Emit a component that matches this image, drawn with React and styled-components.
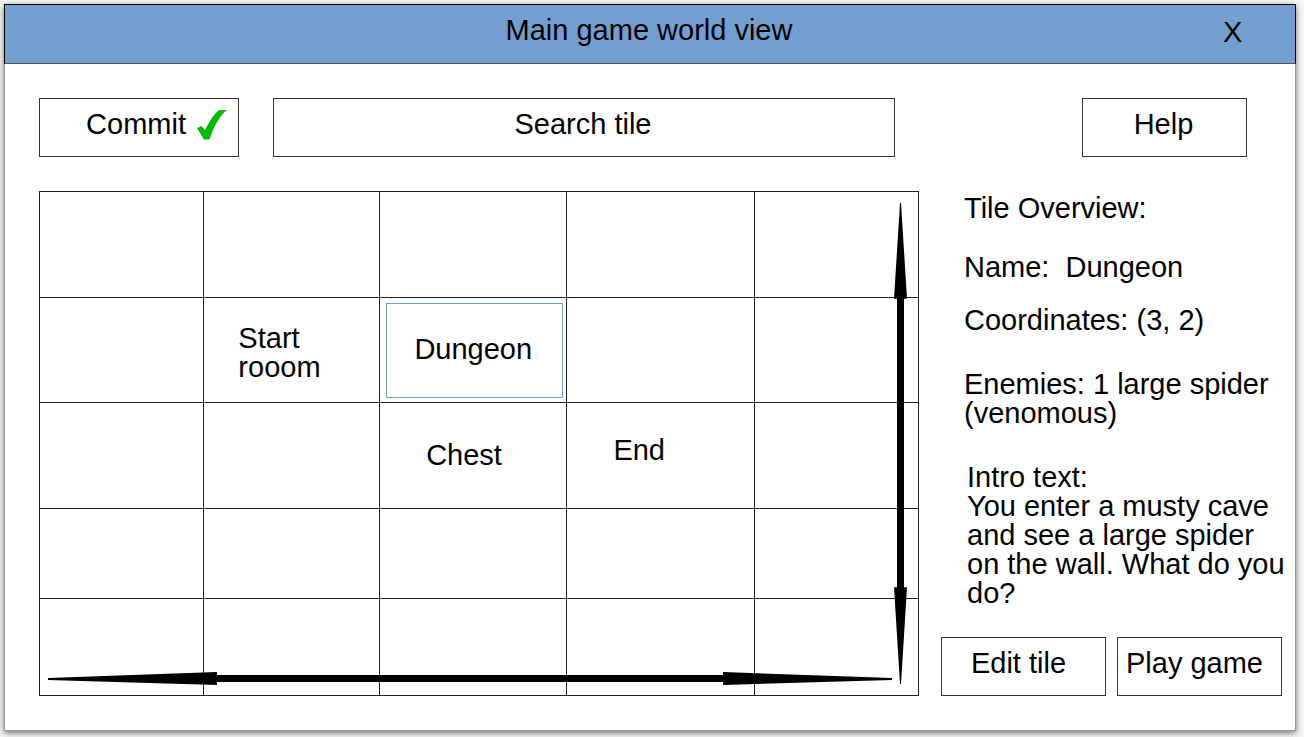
import React from "react";
import styled, { createGlobalStyle } from "styled-components";

const GlobalStyle = createGlobalStyle`
  *, *::before, *::after { box-sizing: border-box; }
  body {
    margin: 0;
    background: #f4f5f7;
    color: #000;
    font-family: "Liberation Sans", Arial, sans-serif;
    font-size: 29px;
    line-height: 29px;
  }
  button, input { font: inherit; color: inherit; }
`;

const Window = styled.main`
  display: flex;
  flex-direction: column;
  min-height: calc(100vh - 10px);
  margin: 4px 8px 6px 4px;
  background: #fff;
  border: 1px solid #98999b;
  border-top: 0;
  box-shadow: 0 2px 6px rgba(0, 0, 0, 0.55);
`;

const TitleBar = styled.header`
  display: grid;
  grid-template-columns: 78px 1fr 80px;
  align-items: center;
  height: 60px;
  margin: 0 -1px;
  padding-bottom: 8px;
  background: #729fcf;
  border: 1px solid #000;
  border-bottom-color: #555;
`;

const Title = styled.h1`
  margin: 0;
  font: inherit;
  text-align: center;
`;

const CloseButton = styled.button`
  justify-self: start;
  padding: 4px 8px 0;
  background: none;
  border: 0;
  cursor: pointer;
`;

const Content = styled.div`
  display: flex;
  flex: 1;
  flex-direction: column;
  gap: 34px;
  padding: 34px 8px 34px 34px;
`;

const Toolbar = styled.div`
  display: flex;
  height: 59px;
  padding-right: 40px;
`;

const BoxButton = styled.button`
  display: flex;
  align-items: center;
  justify-content: ${(p) => p.$align || "center"};
  gap: 10px;
  width: ${(p) => p.$width || 165}px;
  height: 59px;
  padding: 0 ${(p) => p.$padRight || 0}px 6px 0;
  white-space: nowrap;
  background: #fff;
  border: 1px solid #333;
  cursor: pointer;
`;

const SearchInput = styled.input`
  flex: 1;
  min-width: 0;
  margin: 0 187px 0 34px;
  padding: 0 2px 6px 0;
  text-align: center;
  background: #fff;
  border: 1px solid #333;
  border-radius: 0;

  &::placeholder { color: #000; opacity: 1; }
`;

const CheckMark = styled.svg`
  width: 32px;
  height: 32px;
`;

const Workspace = styled.div`
  display: flex;
  flex: 1;
  gap: 22px;
`;

const Board = styled.section`
  position: relative;
  display: flex;
  flex: 1;
`;

const Grid = styled.table`
  width: 100%;
  table-layout: fixed;
  border-collapse: collapse;
`;

const Column = styled.col`
  width: ${(p) => p.$share}%;
`;

const Row = styled.tr`
  height: ${(p) => p.$height}px;
`;

const Tile = styled.td`
  height: inherit;
  padding: 0 0 0 ${(p) => p.$inset || 0}px;
  border: 1px solid #222;
`;

const SelectedTile = styled.div`
  display: flex;
  align-items: center;
  justify-content: center;
  height: 95px;
  margin: 0 3px 0 6px;
  padding: 0 3px 2px 0;
  border: 1px solid #729fcf;
`;

const TileName = styled.div`
  max-width: 100px;
  padding: ${(p) => p.$pad || "0"};
`;

const HorizontalArrow = styled.svg`
  position: absolute;
  left: 9px;
  bottom: 11px;
  width: calc(100% - 36px);
  height: 13px;
`;

const VerticalArrow = styled.svg`
  position: absolute;
  top: 12px;
  right: 12px;
  width: 13px;
  height: calc(100% - 24px);
`;

const Sidebar = styled.aside`
  display: flex;
  flex-direction: column;
  width: 346px;
`;

const Overview = styled.div`
  display: flex;
  flex-direction: column;
  padding: 3px 0 0 23px;
`;

const Line = styled.p`
  margin: 0 0 ${(p) => p.$gap || 0}px;
  white-space: pre-wrap;
`;

const Intro = styled.div`
  padding-left: 3px;
`;

const Actions = styled.div`
  display: flex;
  gap: 11px;
  margin-top: auto;
`;

const columns = [18.7, 20, 21.3, 21.3, 18.7];

const rows = [
  { height: 106, tiles: [{}, {}, {}, {}, {}] },
  {
    height: 105,
    tiles: [{}, { name: "Start rooom", inset: 34, pad: "6px 0 0" }, { name: "Dungeon", selected: true }, {}, {}],
  },
  {
    height: 106,
    tiles: [{}, {}, { name: "Chest", inset: 46 }, { name: "End", inset: 46, pad: "0 0 10px" }, {}],
  },
  { height: 90, tiles: [{}, {}, {}, {}, {}] },
  { height: 97, tiles: [{}, {}, {}, {}, {}] },
];

export default function App() {
  return (
    <>
      <GlobalStyle />
      <Window>
        <TitleBar>
          <span />
          <Title>Main game world view</Title>
          <CloseButton aria-label="Close">X</CloseButton>
        </TitleBar>
        <Content>
          <Toolbar>
            <BoxButton $width={200} $align="flex-end" $padRight={10}>
              <span>Commit</span>
              <CheckMark viewBox="0 0 32 32" aria-hidden="true">
                <path
                  d="M1 19.5 L5 17 C6.5 18 8 20 9 21.3 C13 13 19 3 24 1 L31 1.2 C24 6 17.500 18 14.5 28 C14 30 13 30.500 12 30.500 H8 C6 27 3 22 1 19.5 Z"
                  fill="#0b0"
                />
              </CheckMark>
            </BoxButton>
            <SearchInput type="text" aria-label="Search tile" placeholder="Search tile" />
            <BoxButton $padRight={2}>Help</BoxButton>
          </Toolbar>
          <Workspace>
            <Board aria-label="World map">
              <Grid>
                <colgroup>
                  {columns.map((share, i) => (
                    <Column key={i} $share={share} />
                  ))}
                </colgroup>
                <tbody>
                  {rows.map((row, r) => (
                    <Row key={r} $height={row.height}>
                      {row.tiles.map((tile, c) => (
                        <Tile key={c} $inset={tile.inset}>
                          {tile.selected ? (
                            <SelectedTile>{tile.name}</SelectedTile>
                          ) : (
                            tile.name && <TileName $pad={tile.pad}>{tile.name}</TileName>
                          )}
                        </Tile>
                      ))}
                    </Row>
                  ))}
                </tbody>
              </Grid>
              <HorizontalArrow viewBox="0 0 844 13" preserveAspectRatio="none" aria-hidden="true">
                <path d="M0 6 L169 0 V3 H675 V0 L844 6 V8 L675 13 V10 H169 V13 L0 8 Z" />
              </HorizontalArrow>
              <VerticalArrow viewBox="0 0 13 482" preserveAspectRatio="none" aria-hidden="true">
                <path d="M6 0 L0 96 H3 V385 H0 L6 482 H7 L13 385 H10 V96 H13 L7 0 Z" />
              </VerticalArrow>
            </Board>
            <Sidebar>
              <Overview>
                <Line $gap={30}>Tile Overview:</Line>
                <Line $gap={24}>{"Name:  Dungeon"}</Line>
                <Line $gap={35}>Coordinates: (3, 2)</Line>
                <Line $gap={35}>Enemies: 1 large spider (venomous)</Line>
                <Intro>
                  <Line>Intro text:</Line>
                  <Line>You enter a musty cave and see a large spider on the wall. What do you do?</Line>
                </Intro>
              </Overview>
              <Actions>
                <BoxButton $padRight={10}>Edit tile</BoxButton>
                <BoxButton $padRight={10}>Play game</BoxButton>
              </Actions>
            </Sidebar>
          </Workspace>
        </Content>
      </Window>
    </>
  );
}
